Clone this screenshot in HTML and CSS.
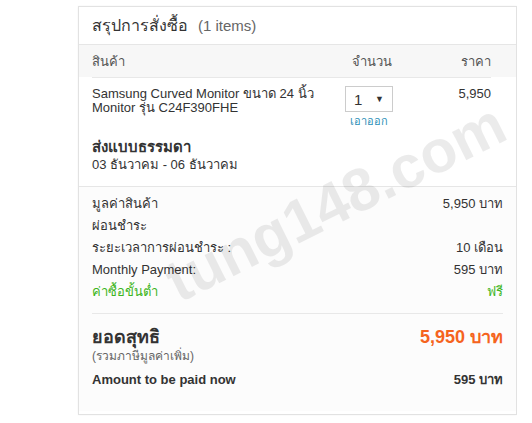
FILE: index.html
```html
<!DOCTYPE html>
<html lang="th">
<head>
  <meta charset="UTF-8">
  <meta name="viewport" content="width=device-width, initial-scale=1.0">
  <link rel="stylesheet" href="styles.css">
  <title>สรุปการสั่งซื้อ</title>
</head>
<body>

<div class="page">
  <div class="summary-card">
    <div class="card-header">
      <span class="card-title">สรุปการสั่งซื้อ</span>
      <span class="item-count">(1 items)</span>
    </div>

    <div class="table-head">
      <div class="col-product">สินค้า</div>
      <div class="col-qty">จำนวน</div>
      <div class="col-price">ราคา</div>
    </div>

    <div class="item-row">
      <div class="col-product item-name">Samsung Curved Monitor ขนาด 24 นิ้ว Monitor รุ่น C24F390FHE</div>
      <div class="col-qty">
        <div class="qty-select">
          <span>1</span>
          <span class="arrow">▼</span>
        </div>
        <a class="remove-link" href="#">เอาออก</a>
      </div>
      <div class="col-price">5,950</div>
    </div>

    <div class="shipping">
      <div class="shipping-title">ส่งแบบธรรมดา</div>
      <div class="shipping-date">03 ธันวาคม - 06 ธันวาคม</div>
    </div>

    <div class="totals">
      <div class="line"><span>มูลค่าสินค้า</span><span>5,950 บาท</span></div>
      <div class="line"><span>ผ่อนชำระ</span><span></span></div>
      <div class="line"><span>ระยะเวลาการผ่อนชำระ :</span><span>10 เดือน</span></div>
      <div class="line"><span>Monthly Payment:</span><span>595 บาท</span></div>
      <div class="line green"><span>ค่าซื้อขั้นต่ำ</span><span>ฟรี</span></div>

      <div class="grand">
        <div class="line grand-line">
          <span>ยอดสุทธิ</span>
          <span class="grand-price">5,950 บาท</span>
        </div>
        <div class="vat-note">(รวมภาษีมูลค่าเพิ่ม)</div>
        <div class="line pay-now"><span>Amount to be paid now</span><span>595 บาท</span></div>
      </div>
    </div>
  </div>

  <div class="watermark">tung148.com</div>
</div>

</body>
</html>
```

FILE: styles.css
```css
body {
  font-family: Arial, "Liberation Sans", Tahoma, sans-serif;
  margin: 0;
  padding: 0;
  background-color: #fff;
  color: #333;
  font-size: 13px;
}

.page {
  position: relative;
  padding: 6px 0 0 78px;
  width: 439px;
  height: 417px;
  overflow: hidden;
}

.summary-card {
  border: 1px solid #e2e2e2;
  height: 407px;
  background-color: #fff;
  box-shadow: 0 0 2px rgba(0, 0, 0, 0.05);
}

.card-header {
  height: 37px;
  padding-left: 13px;
  display: flex;
  align-items: center;
  border-bottom: 1px solid #e6e6e6;
}

.card-title {
  font-size: 16px;
  color: #333;
}

.item-count {
  font-size: 15px;
  color: #666;
  margin-left: 10px;
}

.table-head {
  display: flex;
  align-items: center;
  height: 32px;
  padding: 0 25px 0 13px;
  background-color: #f7f7f7;
  color: #555;
}

.col-product {
  width: 240px;
}

.col-qty {
  width: 80px;
  text-align: center;
}

.col-price {
  flex: 1;
  text-align: right;
}

.item-row {
  display: flex;
  align-items: flex-start;
  margin: 0 25px 0 13px;
  padding-top: 8px;
  border-top: 1px solid #e8e8e8;
}

.item-name {
  line-height: 14px;
  padding-top: 1px;
}

.item-row .col-price {
  padding-top: 1px;
  line-height: 14px;
}

.qty-select {
  display: flex;
  justify-content: space-between;
  align-items: center;
  width: 30px;
  height: 24px;
  margin-left: 13px;
  padding: 0 8px;
  border: 1px solid #ccc;
  background-color: #fff;
  font-size: 15px;
}

.qty-select .arrow {
  font-size: 9px;
}

.remove-link {
  display: block;
  width: 48px;
  margin-top: 2px;
  margin-left: 13px;
  text-align: center;
  font-size: 11px;
  line-height: 14px;
  color: #2c8fb8;
  text-decoration: none;
}

.shipping {
  padding: 9px 13px 12px;
  border-bottom: 1px solid #e6e6e6;
}

.shipping-title {
  font-size: 15px;
  font-weight: bold;
  line-height: 19px;
}

.shipping-date {
  font-size: 13px;
  line-height: 18px;
}

.totals {
  padding: 5px 13px 0;
  background-color: #fcfcfc;
  height: 219px;
}

.line {
  display: flex;
  justify-content: space-between;
  align-items: center;
  height: 22px;
}

.green {
  color: #3cb521;
}

.grand {
  margin-top: 11px;
  padding-top: 10px;
  border-top: 1px solid #e8e8e8;
}

.grand-line {
  height: 24px;
  font-size: 18px;
  font-weight: bold;
}

.grand-price {
  color: #f5641e;
}

.vat-note {
  font-size: 12px;
  color: #666;
  line-height: 16px;
}

.pay-now {
  margin-top: 4px;
  font-weight: bold;
}

.watermark {
  position: absolute;
  left: 180px;
  top: 253px;
  font-size: 60px;
  line-height: 1;
  font-weight: bold;
  color: rgba(0, 0, 0, 0.08);
  transform: rotate(-26.5deg);
  transform-origin: 0 52px;
  white-space: nowrap;
  pointer-events: none;
}
```
